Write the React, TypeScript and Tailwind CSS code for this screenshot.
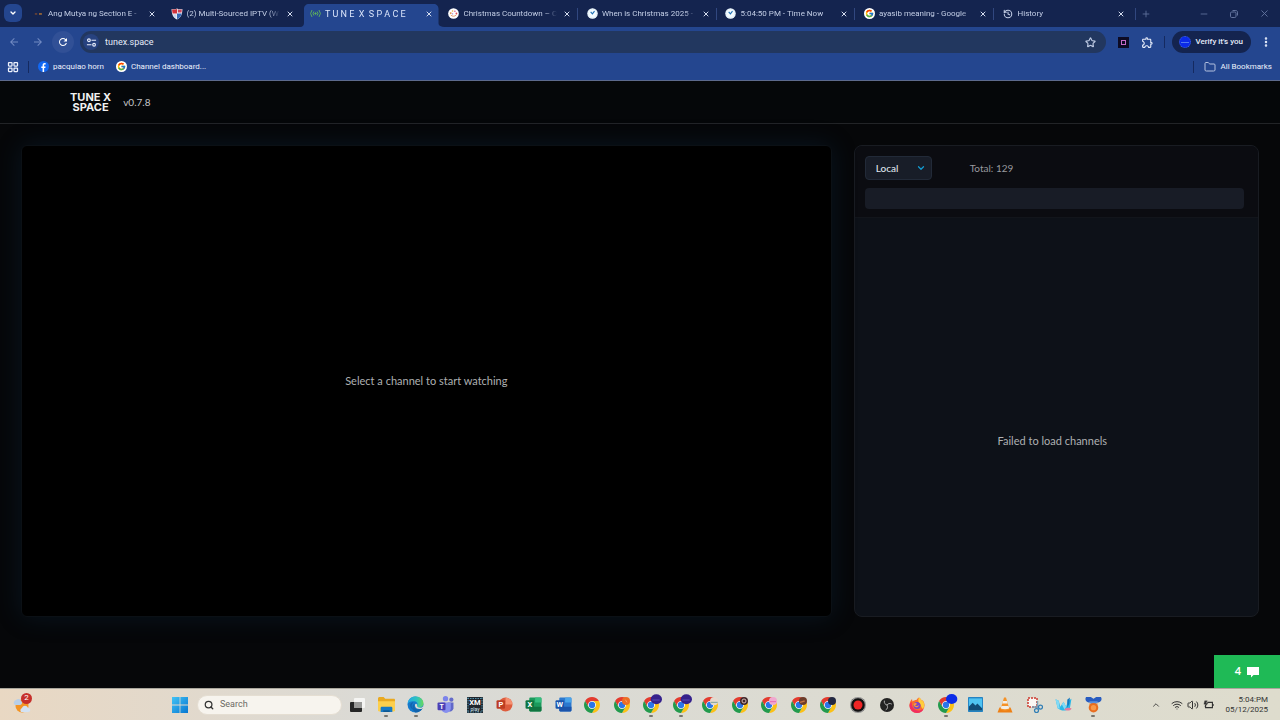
import type { ReactNode } from "react";
import {
  ChevronDown,
  ChevronUp,
  Folder,
  History,
  LayoutGrid,
  Minus,
  MoreVertical,
  Plus,
  Search,
  Star,
  Volume2,
  Wifi,
  X,
} from "lucide-react";
import { FcGoogle } from "react-icons/fc";
import {
  MdArrowBack,
  MdArrowForward,
  MdOutlineExtension,
  MdRefresh,
} from "react-icons/md";

const GoogleIcon = () => (
  <span className="flex size-[11px] items-center justify-center rounded-full bg-white">
    <FcGoogle className="size-[9px]" />
  </span>
);

const ClockIcon = () => (
  <svg viewBox="0 0 12 12" className="size-[11px]">
    <circle cx="6" cy="6" r="5.7" fill="#f4fbff" />
    <circle cx="6" cy="6" r="4.6" fill="none" stroke="#cfe6f5" strokeWidth=".5" />
    <path d="M4 4.2 5.9 6.4 8.2 3.4" fill="none" stroke="#1c6fb4" strokeWidth="1.2" />
  </svg>
);

const DashIcon = () => (
  <svg viewBox="0 0 12 12" className="size-[11px]">
    <path d="M2 6.5h2.6" stroke="#8a4d2c" strokeWidth="1.3" />
    <path d="M6.5 6.5h3.2" stroke="#d5842b" strokeWidth="1.3" />
  </svg>
);

const ShieldIcon = () => (
  <svg viewBox="0 0 12 12" className="size-3">
    <path d="M.6 1C3 1.6 4.500 1.200 6 .4c1.500.8 3 1.200 5.400.6 0 5-1.400 8.600-5.400 10.600C2 9.600.6 6 .6 1z" fill="#f2f5fb" />
    <path d="M1 1.500c2 .3 3.500 0 5-.6v4.600H1.600z" fill="#d0323c" />
    <path d="M6 5.500h4.600C10 8.300 8.600 10.200 6 11.300z" fill="#3467b5" />
    <path d="M6.800 1.200c1 .5 2.400.6 4 .4l-.2 3H6.800z" fill="#c9455a" />
    <path d="M2 6.200h3.300v4C3.500 9.200 2.500 8 2 6.200z" fill="#c6d4ee" />
  </svg>
);

const BroadcastIcon = () => (
  <svg viewBox="0 0 12 12" className="size-[11px]" fill="none" stroke="#5fb45c" strokeWidth="1">
    <circle cx="6" cy="6" r=".8" fill="#5fb45c" />
    <path d="M4.200 3.800a3.500 3.500 0 0 0 0 4.400M7.800 3.800a3.500 3.500 0 0 1 0 4.400M2.200 2.200a6 6 0 0 0 0 7.600M9.800 2.200a6 6 0 0 1 0 7.600" />
  </svg>
);

const WreathIcon = () => (
  <svg viewBox="0 0 12 12" className="size-[11px]">
    <circle cx="6" cy="6" r="5.8" fill="#fff" />
    <circle cx="3" cy="5.500" r="1" fill="#e38a3c" />
    <circle cx="5" cy="3.300" r=".9" fill="#e2b13f" />
    <circle cx="7.500" cy="3.500" r=".9" fill="#d9619a" />
    <circle cx="9.200" cy="6" r="1" fill="#e04a52" />
    <circle cx="5" cy="6.300" r=".7" fill="#8c6bd1" />
    <path d="M3 7.700c1.800 1.700 4.200 1.700 6 0" stroke="#d97a3a" fill="none" strokeWidth=".8" />
  </svg>
);

const tabs = [
  { title: "Ang Mutya ng Section E -", icon: <DashIcon /> },
  { title: "(2) Multi-Sourced IPTV (W", icon: <ShieldIcon /> },
  { title: "T U N E \u00a0X \u00a0S P A C E", icon: <BroadcastIcon />, active: true },
  { title: "Christmas Countdown – C", icon: <WreathIcon /> },
  { title: "When is Christmas 2025 -", icon: <ClockIcon />, divider: true },
  { title: "5:04:50 PM - Time Now", icon: <ClockIcon />, divider: true },
  { title: "ayasib meaning - Google", icon: <GoogleIcon />, divider: true },
  { title: "History", icon: <History className="size-[10px]" strokeWidth={2.5} />, divider: true },
];

const BrowserTabs = () => (
  <div className="flex h-[27px] bg-[#14244f] text-[#c3cee6]">
    <div className="w-[27px] shrink-0 pl-1 pt-1">
      <button aria-label="Search tabs" className="flex size-[18px] items-center justify-center rounded-md bg-[#24468f] text-white">
        <ChevronDown className="size-2" strokeWidth={4} />
      </button>
    </div>
    <div className="flex min-w-0 flex-1 pt-1">
      {tabs.map((tab) => (
        <div key={tab.title} className="relative min-w-0 flex-1 pr-1">
          {tab.divider && <span className="absolute -left-1 top-1 h-3 w-px bg-[#31477f]" />}
          {tab.active && (
            <svg viewBox="0 0 147 23" preserveAspectRatio="none" className="absolute -left-1 top-0 h-full w-[calc(100%+8px)]">
              <path d="M0 23c3 0 4-2 4-4V5c0-3 2-5 5-5h125c3 0 5 2 5 5v14c0 2 1 4 8 4z" fill="#24468f" />
            </svg>
          )}
          <div className={tab.active ? "relative flex h-[19px] items-center pl-[5px] text-[9px] text-[#dbe5fb]" : "relative flex h-[19px] items-center pl-[5px] text-[8px]"}>
            <span className="flex w-3 shrink-0 justify-center">{tab.icon}</span>
            <button className="ml-1 min-w-0 flex-1 overflow-hidden whitespace-nowrap text-left leading-3 [mask-image:linear-gradient(to_right,black_88%,transparent)]">
              {tab.title}
            </button>
            <button aria-label="Close tab" className="ml-1 mr-1 flex size-3 shrink-0 items-center justify-center text-[#d5ddef]">
              <X className="size-2" strokeWidth={3} />
            </button>
          </div>
        </div>
      ))}
    </div>
    <div className="flex w-[145px] shrink-0 items-center text-[#63749f]">
      <span className="h-3 w-px bg-[#31477f]" />
      <button aria-label="New tab" className="ml-1 flex size-3 items-center justify-center">
        <Plus className="size-[10px]" />
      </button>
      <div className="ml-auto flex items-center gap-5 pr-[10px]">
        <button aria-label="Minimize"><Minus className="size-[10px]" strokeWidth={2} /></button>
        <button aria-label="Restore">
          <svg viewBox="0 0 10 10" className="size-[10px]" fill="none" stroke="currentColor">
            <rect x="1.500" y="3" width="5.500" height="5.500" rx="1.200" />
            <path d="M3.500 1.500h3.300c1 0 1.700.7 1.700 1.700v3.300" />
          </svg>
        </button>
        <button aria-label="Close window"><X className="size-[11px]" strokeWidth={2} /></button>
      </div>
    </div>
  </div>
);

const Toolbar = () => (
  <div className="flex h-[30px] items-center bg-[#24468f] text-[#e6ecfa]">
    <div className="flex items-center gap-1 pl-1">
      <button aria-label="Back" className="flex size-5 items-center justify-center text-[#7189c2]"><MdArrowBack className="size-3" /></button>
      <button aria-label="Forward" className="flex size-5 items-center justify-center text-[#7189c2]"><MdArrowForward className="size-3" /></button>
      <button aria-label="Reload" className="flex size-[22px] items-center justify-center rounded-full bg-[#315096] text-white"><MdRefresh className="size-3" /></button>
    </div>
    <div className="ml-[6px] flex h-[22px] flex-1 items-center rounded-full bg-[#22375f] pl-[3px] pr-[10px]">
      <button aria-label="Site information" className="flex size-4 items-center justify-center rounded-full bg-[#27427f]">
        <svg viewBox="0 0 12 12" className="size-[11px]" fill="none" stroke="currentColor" strokeWidth="1.2">
          <circle cx="3.200" cy="3.500" r="1.500" />
          <path d="M6 3.500h5M1 8.500h5" />
          <circle cx="8.800" cy="8.500" r="1.500" />
        </svg>
      </button>
      <input aria-label="Address" defaultValue="tunex.space" className="ml-[6px] min-w-0 flex-1 bg-transparent text-[9px] leading-4 outline-none" />
      <button aria-label="Bookmark this tab"><Star className="size-[11px] text-[#bfcbe4]" strokeWidth={2.5} /></button>
    </div>
    <button aria-label="Tunex extension" className="ml-3 flex size-[11px] items-center justify-center bg-[#0d0b24]">
      <span className="size-[5px] border border-[#c56ac8]" />
    </button>
    <button aria-label="Extensions" className="ml-3"><MdOutlineExtension className="size-[13px]" /></button>
    <span className="ml-[10px] h-3 w-px bg-[#152a60]" />
    <button className="ml-[7px] flex h-[22px] items-center gap-1 rounded-full bg-[#14244f] pl-[7px] pr-2 text-[8px] font-medium">
      <span className="flex size-3 items-center justify-center rounded-full border border-dotted border-[#4468c9] bg-[#0b2ae8]">
        <span className="h-px w-2 bg-[#5079ef]" />
      </span>
      Verify it's you
    </button>
    <button aria-label="Browser menu" className="ml-[9px] mr-2"><MoreVertical className="size-3" strokeWidth={3} /></button>
  </div>
);

const Bookmarks = () => (
  <div className="flex h-6 items-center border-b border-[#5d6a8c] bg-[#24468f] pb-1 text-[8px] text-[#eef2fc]">
    <button aria-label="Apps" className="ml-[7px]"><LayoutGrid className="size-3" strokeWidth={2.5} /></button>
    <span className="ml-[9px] h-3 w-px bg-[#152a60]" />
    <a href="#facebook" className="ml-[9px] flex items-center gap-1">
      <svg viewBox="0 0 12 12" className="size-[11px]">
        <circle cx="6" cy="6" r="6" fill="#1268f3" />
        <path d="M5 12V7.500H3.600V5.900H5V4.700C5 3.100 5.900 2.300 7.200 2.300c.6 0 1 .1 1.200.1v1.500h-.8c-.7 0-.9.4-.9 1v1h1.600l-.3 1.600H6.700V12z" fill="#fff" />
      </svg>
      pacquiao horn
    </a>
    <a href="#dashboard" className="ml-3 flex items-center gap-1"><GoogleIcon />Channel dashboard...</a>
    <div className="ml-auto flex items-center pr-2">
      <span className="h-3 w-px bg-[#152a60]" />
      <button className="ml-[10px] flex items-center gap-1"><Folder className="size-3 text-[#b5c2df]" />All Bookmarks</button>
    </div>
  </div>
);

const Player = () => (
  <section className="relative flex items-center justify-center rounded-md border border-[#0b1015] bg-black text-[11px] text-[#aeb0b2] shadow-[0_0_26px_rgba(20,70,110,0.22)]">
    Select a channel to start watching
  </section>
);

const ChannelPanel = () => (
  <section className="flex flex-col overflow-hidden rounded-lg border border-[#191c22] bg-[#0d1118]">
    <div className="border-b border-[#12151b] bg-[#0b0c11] px-[10px] pb-2 pt-[10px]">
      <div className="flex items-center">
        <label className="relative block h-6">
          <select aria-label="Source" className="block h-6 w-[67px] appearance-none rounded border border-[#222a38] bg-[#181d28] pl-[10px] text-[10px] font-medium text-[#dfe3ea] outline-none">
            <option>Local</option>
            <option>Global</option>
          </select>
          <ChevronDown className="pointer-events-none absolute right-[6px] top-[7px] size-[10px] text-[#129bd2]" strokeWidth={3} />
        </label>
        <span className="ml-[38px] text-[10px] text-[#97999e]">Total: 129</span>
      </div>
      <input aria-label="Search channels" className="mr-1 mt-2 block h-[21px] w-[calc(100%-4px)] rounded-sm bg-[#181c26] px-2 text-[10px] text-gray-300 outline-none" />
    </div>
    <div className="flex flex-1 items-center justify-center pr-2 pt-12 text-[11px] text-[#aeb0b2]">Failed to load channels</div>
  </section>
);

const Chrome = ({ badge }: { badge?: ReactNode }) => (
  <svg viewBox="0 0 48 48" className="size-4 overflow-visible">
    <circle cx="24" cy="24" r="12" fill="#fff" />
    <path d="M24 12h20.780a24 24 0 0 0-41.560 0L13.610 30A12 12 0 0 1 24 12z" fill="#e33b2e" />
    <path d="M34.390 30 24 48a24 24 0 0 0 20.780-36H24a12 12 0 0 1 10.390 18z" fill="#fbc116" />
    <path d="M13.610 30 3.220 12A24 24 0 0 0 24 48l10.390-18a12 12 0 0 1-20.780 0z" fill="#229a4c" />
    <circle cx="24" cy="24" r="9.500" fill="#2b75e8" />
    {badge}
  </svg>
);

const BigBadge = ({ color }: { color: string }) => (
  <>
    <ellipse cx="40" cy="7" rx="17" ry="15" fill={color} />
    <path d="M28 9h22" stroke="#6a62c8" strokeWidth="2" />
  </>
);

const Office = ({ letter, dark, mid, light, round }: { letter: string; dark: string; mid: string; light: string; round?: boolean }) => (
  <svg viewBox="0 0 32 32" className="size-[17px]">
    {round ? (
      <>
        <circle cx="18" cy="16" r="13" fill={mid} />
        <path d="M18 3a13 13 0 0 1 13 13H18z" fill={light} />
      </>
    ) : (
      <>
        <rect x="8" y="3" width="23" height="26" rx="2" fill={mid} />
        <path d="M19 3h10a2 2 0 0 1 2 2v7H19z" fill={light} />
        <path d="M8 20h23v7a2 2 0 0 1-2 2H10a2 2 0 0 1-2-2z" fill={dark} />
      </>
    )}
    <rect x="1" y="8" width="16" height="16" rx="2" fill={dark} />
    <text x="9" y="21" textAnchor="middle" fontSize="14" fontWeight="700" fill="#fff">{letter}</text>
  </svg>
);

const apps: { name: string; icon: ReactNode; running?: boolean }[] = [
  {
    name: "Task view",
    icon: (
      <svg viewBox="0 0 16 16" className="size-4">
        <rect x="5" y="1" width="11" height="10" rx="1" fill="#f5f5f3" />
        <rect x="1" y="5" width="12" height="10" rx="1" fill="#262626" />
        <path d="M5 5h8v6H5z" fill="#9a9a98" />
      </svg>
    ),
  },
  {
    name: "File Explorer",
    running: true,
    icon: (
      <svg viewBox="0 0 16 16" className="size-[17px]">
        <path d="M0 2.500C0 1.700.5 1 1.300 1h4l1.500 1.700H15c.6 0 1 .4 1 1V13c0 .6-.4 1-1 1H1c-.6 0-1-.4-1-1z" fill="#e9a920" />
        <path d="M0 5h16v8.500c0 .6-.4 1-1 1H1c-.6 0-1-.4-1-1z" fill="#fccf4d" />
        <path d="M2.500 15v-3.500c0-.8.5-1.300 1.300-1.300h8.400c.8 0 1.300.5 1.300 1.300V15z" fill="#1679c4" />
        <path d="M5 15v-1.500h6V15z" fill="#0c5690" />
      </svg>
    ),
  },
  {
    name: "Edge",
    running: true,
    icon: (
      <svg viewBox="0 0 32 32" className="size-[17px]">
        <defs>
          <linearGradient id="edgeTop" x1="0" x2="1">
            <stop stopColor="#22a7e8" />
            <stop offset=".6" stopColor="#2ec4bd" />
            <stop offset="1" stopColor="#69d95a" />
          </linearGradient>
        </defs>
        <circle cx="16" cy="16" r="15" fill="#167acb" />
        <path d="M1 15C2 6 8 1 16 1c9 0 15 6 15 13 0 5-4 8-8 8-3 0-5-1-4-3 2-3 1-8-5-9C8 9 3 11 1 15z" fill="url(#edgeTop)" />
        <path d="M12 12c-5 4-4 12 4 15-7-1-11-6-10-11 1-3 4-5 6-4z" fill="#1264ae" />
        <path d="M14 14c-2 5 1 11 7 11 4 0 7-1 9-3-3 6-8 9-14 9-6-4-8-13-2-17z" fill="#1264ae" />
        <path d="M19 18c-1 3 4 5 8 4 2-1 3-2 4-3l-1 4c-5 3-15 2-15-5 0-2 1-4 3-3 1 1 2 2 1 3z" fill="#dcdad4" />
      </svg>
    ),
  },
  {
    name: "Teams",
    icon: (
      <svg viewBox="0 0 32 32" className="size-[17px]">
        <circle cx="16" cy="5" r="5" fill="#7b83eb" />
        <circle cx="27" cy="7" r="4" fill="#646bc9" />
        <path d="M20 12h11v11a7 7 0 0 1-11 5z" fill="#6068c9" />
        <path d="M8 12h18v11a9 9 0 0 1-18 0z" fill="#8790ee" />
        <rect x="1" y="12" width="15" height="15" rx="2" fill="#4b40b5" />
        <text x="8.500" y="24" textAnchor="middle" fontSize="13" fontWeight="700" fill="#fff">T</text>
      </svg>
    ),
  },
  {
    name: "XMPlay",
    icon: (
      <svg viewBox="0 0 32 32" className="size-4">
        <rect width="32" height="32" fill="#20262d" />
        <path d="M1 3h30M1 30h30M2 1v30M30 1v30" stroke="#5390aa" strokeWidth="2" strokeDasharray="3 2" />
        <text x="16" y="16" textAnchor="middle" fontSize="15" fontWeight="700" fill="#fff">XM</text>
        <text x="16" y="27" textAnchor="middle" fontSize="10" fill="#d5edf7">play</text>
      </svg>
    ),
  },
  { name: "PowerPoint", icon: <Office letter="P" dark="#bd3d22" mid="#dd5c3d" light="#f58f70" round /> },
  { name: "Excel", icon: <Office letter="X" dark="#107540" mid="#1b9a5c" light="#35bd7e" /> },
  { name: "Word", icon: <Office letter="W" dark="#1b54ab" mid="#2b78cf" light="#49a4ea" /> },
  { name: "Chrome", icon: <Chrome /> },
  { name: "Chrome orange", icon: <Chrome badge={<><circle cx="36" cy="12" r="12" fill="#ed6d25" /><path d="M34 8l5 8" stroke="#ffb279" strokeWidth="2" /></>} /> },
  { name: "Chrome work", running: true, icon: <Chrome badge={<BigBadge color="#35218c" />} /> },
  { name: "Chrome school", running: true, icon: <Chrome badge={<BigBadge color="#35218c" />} /> },
  { name: "Chrome home", icon: <Chrome badge={<><circle cx="36" cy="13" r="12" fill="#e6d9ce" /><path d="M26 16h21" stroke="#7da397" strokeWidth="3" /></>} /> },
  { name: "Chrome music", icon: <Chrome badge={<><circle cx="36" cy="12" r="12" fill="#40272b" /><circle cx="36" cy="12" r="6" fill="none" stroke="#d9b6ae" strokeWidth="3" /></>} /> },
  { name: "Chrome pink", icon: <Chrome badge={<><circle cx="36" cy="12" r="12" fill="#f0a8cf" /><path d="M27 14h18" stroke="#e56ab0" strokeWidth="3" /></>} /> },
  { name: "Chrome photo", icon: <Chrome badge={<><circle cx="36" cy="12" r="12" fill="#6d3c2a" /><path d="M27 16l14-4" stroke="#c37442" strokeWidth="4" /></>} /> },
  { name: "Chrome dark", icon: <Chrome badge={<circle cx="36" cy="12" r="12" fill="#222842" />} /> },
  {
    name: "Recorder",
    icon: (
      <svg viewBox="0 0 32 32" className="size-4">
        <circle cx="16" cy="16" r="16" fill="#777" />
        <circle cx="16" cy="16" r="14.500" fill="#111" stroke="#eee" />
        <circle cx="16" cy="16" r="9" fill="#ef2525" />
      </svg>
    ),
  },
  {
    name: "OBS Studio",
    icon: (
      <svg viewBox="0 0 32 32" className="size-[14px]">
        <circle cx="16" cy="16" r="16" fill="#232323" />
        <path d="M10 6c-1 6 2 9 6 10M27 14c-5-3-9-1-11 2M13 27c5-2 5-7 3-11" fill="none" stroke="#bbb" strokeWidth="2" />
      </svg>
    ),
  },
  {
    name: "Firefox",
    icon: (
      <svg viewBox="0 0 32 32" className="size-4">
        <path d="M20 1c4 3 5 5 6 8l1-3c3 4 4 7 4 11a15 15 0 0 1-30 0C1 11 3 7 6 4l1 5c2-2 5-3 8-3 1-2 3-4 5-5z" fill="#fb6b2d" />
        <path d="M20 1c4 3 5 5 6 8l1-3c4 6 5 12 1 18-4-2-3-7-6-10-3-3-5-7-2-13z" fill="#ffce3b" />
        <path d="M1 17c0 9 7 15 15 15 6 0 11-3 13-8-7 4-16 5-21-3-2-3-3-7-2-11-3 1-5 4-5 7z" fill="#f12e60" />
        <circle cx="16" cy="17" r="7" fill="#7946c9" />
        <path d="M9 14c3-3 6-2 7 0l-4 3c3 2 6 1 8-1-1 6-10 7-11-2z" fill="#ff9a30" />
      </svg>
    ),
  },
  { name: "Chrome current", running: true, icon: <Chrome badge={<ellipse cx="41" cy="6" rx="17" ry="15" fill="#0c2ce8" />} /> },
  {
    name: "Photos",
    icon: (
      <svg viewBox="0 0 16 16" className="size-[15px]">
        <rect width="16" height="16" rx=".8" fill="#2583c2" />
        <rect x="1" y="1.500" width="14" height="13" fill="#4fc3f2" />
        <path d="M1 10l4-4 3 3 2-2 5 5v2.500H1z" fill="#114c78" />
      </svg>
    ),
  },
  {
    name: "VLC",
    icon: (
      <svg viewBox="0 0 32 32" className="size-4">
        <path d="M5 21h22l4 10H1z" fill="#ee8014" />
        <path d="M14 1h4l7 24c-5 3-13 3-18 0z" fill="#f59227" />
        <path d="M12.200 8h7.600l1.600 5h-10.800zM9 18h14l1.600 5c-5 2-12 2-17.200 0z" fill="#f3eee6" />
      </svg>
    ),
  },
  {
    name: "Snipping Tool",
    icon: (
      <svg viewBox="0 0 32 32" className="size-4" fill="none">
        <rect x="2" y="2" width="18" height="18" fill="#fbf7f4" stroke="#cc392d" strokeWidth="3" strokeDasharray="4 2" />
        <path d="M21 8v15M10 20h13" stroke="#7e9fb5" strokeWidth="3" />
        <circle cx="19" cy="27" r="4" stroke="#307eb5" strokeWidth="2.500" />
        <circle cx="27" cy="20" r="4" stroke="#307eb5" strokeWidth="2.500" />
      </svg>
    ),
  },
  {
    name: "Paint",
    icon: (
      <svg viewBox="0 0 32 32" className="size-[17px]">
        <path d="M1 6l6 3 3 11 6-9 5 9 3-10 7-5-3 18c-8 6-15 6-23 0z" fill="#28b7e8" />
        <path d="M1 6l6 3 2 15-4-1zM16 11l5 9-3 6-5-10z" fill="#83daf5" />
        <path d="M17 25c3-3 10-4 14-2 0 5-10 6-14 2z" fill="#e27b9d" />
        <path d="M23 7l5-4-1 12-4 7z" fill="#1479c0" />
      </svg>
    ),
  },
  {
    name: "Medal",
    running: true,
    icon: (
      <svg viewBox="0 0 32 32" className="size-[17px]">
        <path d="M2 2h9l5 3 5-3h9c3 4 0 10-5 10H7C2 12-1 6 2 2z" fill="#285cc0" />
        <path d="M8 10h16l-4 8h-8z" fill="#5a91df" />
        <path d="M8 13c5 3 11 3 16 0l-2 7H10z" fill="#f6a04c" />
        <circle cx="16" cy="22" r="9" fill="#e86d20" />
        <circle cx="16" cy="22" r="5" fill="#f9994a" />
      </svg>
    ),
  },
];

const Taskbar = () => (
  <footer className="flex h-8 items-center border-t border-[#a9a69c] bg-linear-to-r from-[#e9d8c3] via-[#dadad6] via-30% to-[#dedccd] text-[#333]">
    <div className="w-[165px] shrink-0 pl-[13px]">
      <button aria-label="Widgets" className="relative block">
        <svg viewBox="0 0 18 18" className="size-[18px]">
          <circle cx="9" cy="10" r="6.500" fill="#f39425" />
          <path d="M1 8a3 3 0 0 1 2-4c2-2 5-1 5 1 2 1 1 4-1 4H2z" fill="#b9cfe8" />
          <path d="M8 16a2.500 2.500 0 0 1 1-4c1-3 5-3 6 0 3 0 3 4 0 4z" fill="#d3e2f3" />
        </svg>
        <span className="absolute -top-[3px] left-2 flex size-[11px] items-center justify-center rounded-full bg-[#c62f2b] text-[8px] leading-none text-white">2</span>
      </button>
    </div>
    <button aria-label="Start" className="flex w-[30px] shrink-0 justify-center">
      <svg viewBox="0 0 16 16" className="size-4">
        <defs>
          <linearGradient id="start" x2="1" y2="1">
            <stop stopColor="#43c3f5" />
            <stop offset="1" stopColor="#0676d1" />
          </linearGradient>
        </defs>
        <path d="M0 0h7.600v7.600H0zM8.400 0H16v7.600H8.400zM0 8.400h7.600V16H0zM8.400 8.400H16V16H8.400z" fill="url(#start)" />
      </svg>
    </button>
    <label className="ml-[2px] flex h-5 w-[145px] shrink-0 items-center gap-[6px] rounded-full border border-[#e5ded2] bg-[#f7f4ee] px-[6px]">
      <Search className="size-[10px] shrink-0" strokeWidth={3} />
      <input aria-label="Search" placeholder="Search" className="min-w-0 flex-1 bg-transparent text-[9px] outline-none placeholder:text-[#6c6963]" />
    </label>
    <div className="flex min-w-0 flex-1">
      {apps.map((app) => (
        <button key={app.name} aria-label={app.name} className="relative flex h-[31px] min-w-0 flex-1 items-center justify-center">
          {app.icon}
          {app.running && <span className="absolute bottom-[3px] h-[2px] w-1 rounded-full bg-[#77756e]" />}
        </button>
      ))}
    </div>
    <div className="flex w-[172px] shrink-0 items-center justify-end pr-3">
      <button aria-label="Hidden icons"><ChevronUp className="size-[10px]" /></button>
      <button aria-label="Network, sound and battery" className="ml-[10px] flex items-center gap-1">
        <Wifi className="size-3" />
        <Volume2 className="size-3" />
        <svg viewBox="0 0 14 12" className="h-3 w-3" fill="none" stroke="currentColor">
          <path d="M5 3h6v6H3V6M12 5v2" strokeWidth="1.300" />
          <path d="M2 1h3L3.500 4H6L2 8l1-3H1z" fill="currentColor" strokeWidth=".3" />
        </svg>
      </button>
      <button className="ml-[10px] text-right text-[8px] leading-[10px]">
        5:04:PM
        <br />
        05/12/2025
      </button>
    </div>
  </footer>
);

const App = () => {
  return (
    <div className="flex min-h-screen flex-col bg-[#050608] font-['Roboto','Noto_Sans',sans-serif]">
      <BrowserTabs />
      <Toolbar />
      <Bookmarks />
      <div className="relative flex flex-1 flex-col bg-[#060709] font-['Lato','Noto_Sans',sans-serif]">
        <header className="flex h-[43px] items-center border-b border-[#222427] bg-[#050709] pl-[70px]">
          <h1 className="text-center font-['Inter',sans-serif] text-[11px] font-bold leading-[10px] text-[#f1f1f1]">
            TUNE X
            <br />
            SPACE
          </h1>
          <span className="ml-3 text-[10px] text-[#c5c6c8]">v0.7.8</span>
        </header>
        <main className="grid flex-1 grid-cols-[2fr_1fr] gap-[22px] px-[21px] pb-[71px] pt-[21px]">
          <Player />
          <ChannelPanel />
        </main>
        <button aria-label="4 chat messages" className="absolute bottom-0 right-0 flex h-[33px] w-[66px] items-center justify-center gap-[6px] bg-[#1fba56] text-[11px] font-bold text-white">
          4
          <svg viewBox="0 0 12 12" className="size-3" fill="currentColor">
            <path d="M0 1h12v8H6.500L4 11.500V9H0z" />
          </svg>
        </button>
      </div>
      <Taskbar />
    </div>
  );
};

export default App;
